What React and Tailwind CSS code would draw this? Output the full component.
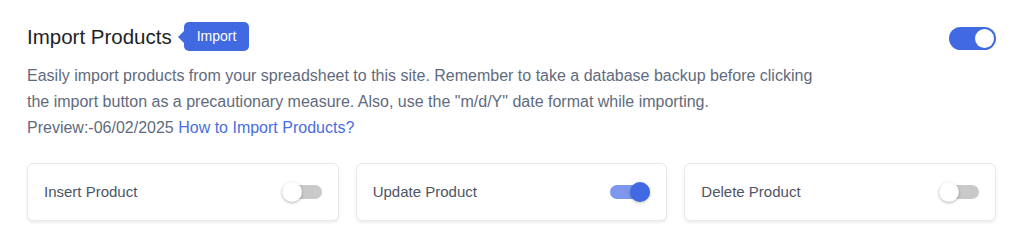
import React from "react";

function MiniSwitch({ on }) {
  return (
    <div className="relative w-[40px] h-[20px] flex items-center">
      <div className={"w-full h-[14px] rounded-full " + (on ? "bg-[#7d97ec]" : "bg-[#c9c9c9]")} />
      <div
        className={
          "absolute top-0 w-[20px] h-[20px] rounded-full " +
          (on
            ? "right-0 bg-[#4169e1] shadow-[0_1px_3px_rgba(0,0,0,0.25)]"
            : "left-0 bg-white shadow-[0_1px_3px_rgba(0,0,0,0.3)]")
        }
      />
    </div>
  );
}

function Card({ label, on }) {
  return (
    <div className="h-[58px] bg-white border border-[#e6e8ec] rounded-[6px] shadow-[0_2px_3px_rgba(0,0,0,0.07)] flex items-center justify-between pl-[16px] pr-[16px]">
      <span className="text-[15px] text-[#4d5566]">{label}</span>
      <MiniSwitch on={on} />
    </div>
  );
}

export default function App() {
  return (
    <div className="w-[1024px] h-[249px] bg-white pl-[27px] pr-[28px] pt-[22px] font-['Liberation_Sans',Arial,sans-serif]">
      <div className="flex items-center justify-between h-[29px]">
        <div className="flex items-center">
          <h2 className="text-[20.5px] leading-none text-[#1d2327] pt-[1px]">Import Products</h2>
          <div className="relative ml-[12px] h-[29px] px-[13px] rounded-[5px] bg-[#4169e1] text-white text-[14px] flex items-center">
            <span className="absolute left-[-6px] top-1/2 -translate-y-1/2 w-0 h-0 border-y-[6px] border-y-transparent border-r-[6px] border-r-[#4169e1]" />
            Import
          </div>
        </div>
        <div className="relative w-[47px] h-[23px] rounded-full bg-[#4169e1] mt-[3px]">
          <div className="absolute right-[2px] top-[2px] w-[19px] h-[19px] rounded-full bg-white" />
        </div>
      </div>
      <p className="mt-[12px] text-[16px] leading-[26px] text-[#5f6b7d]">
        Easily import products from your spreadsheet to this site. Remember to take a database backup before clicking
        <br />
        the import button as a precautionary measure. Also, use the "m/d/Y" date format while importing.
        <br />
        Preview:-06/02/2025 <a className="text-[#4a6ee0]">How to Import Products?</a>
      </p>
      <div className="mt-[22px] grid grid-cols-3 gap-[17px]">
        <Card label="Insert Product" on={false} />
        <Card label="Update Product" on={true} />
        <Card label="Delete Product" on={false} />
      </div>
    </div>
  );
}
